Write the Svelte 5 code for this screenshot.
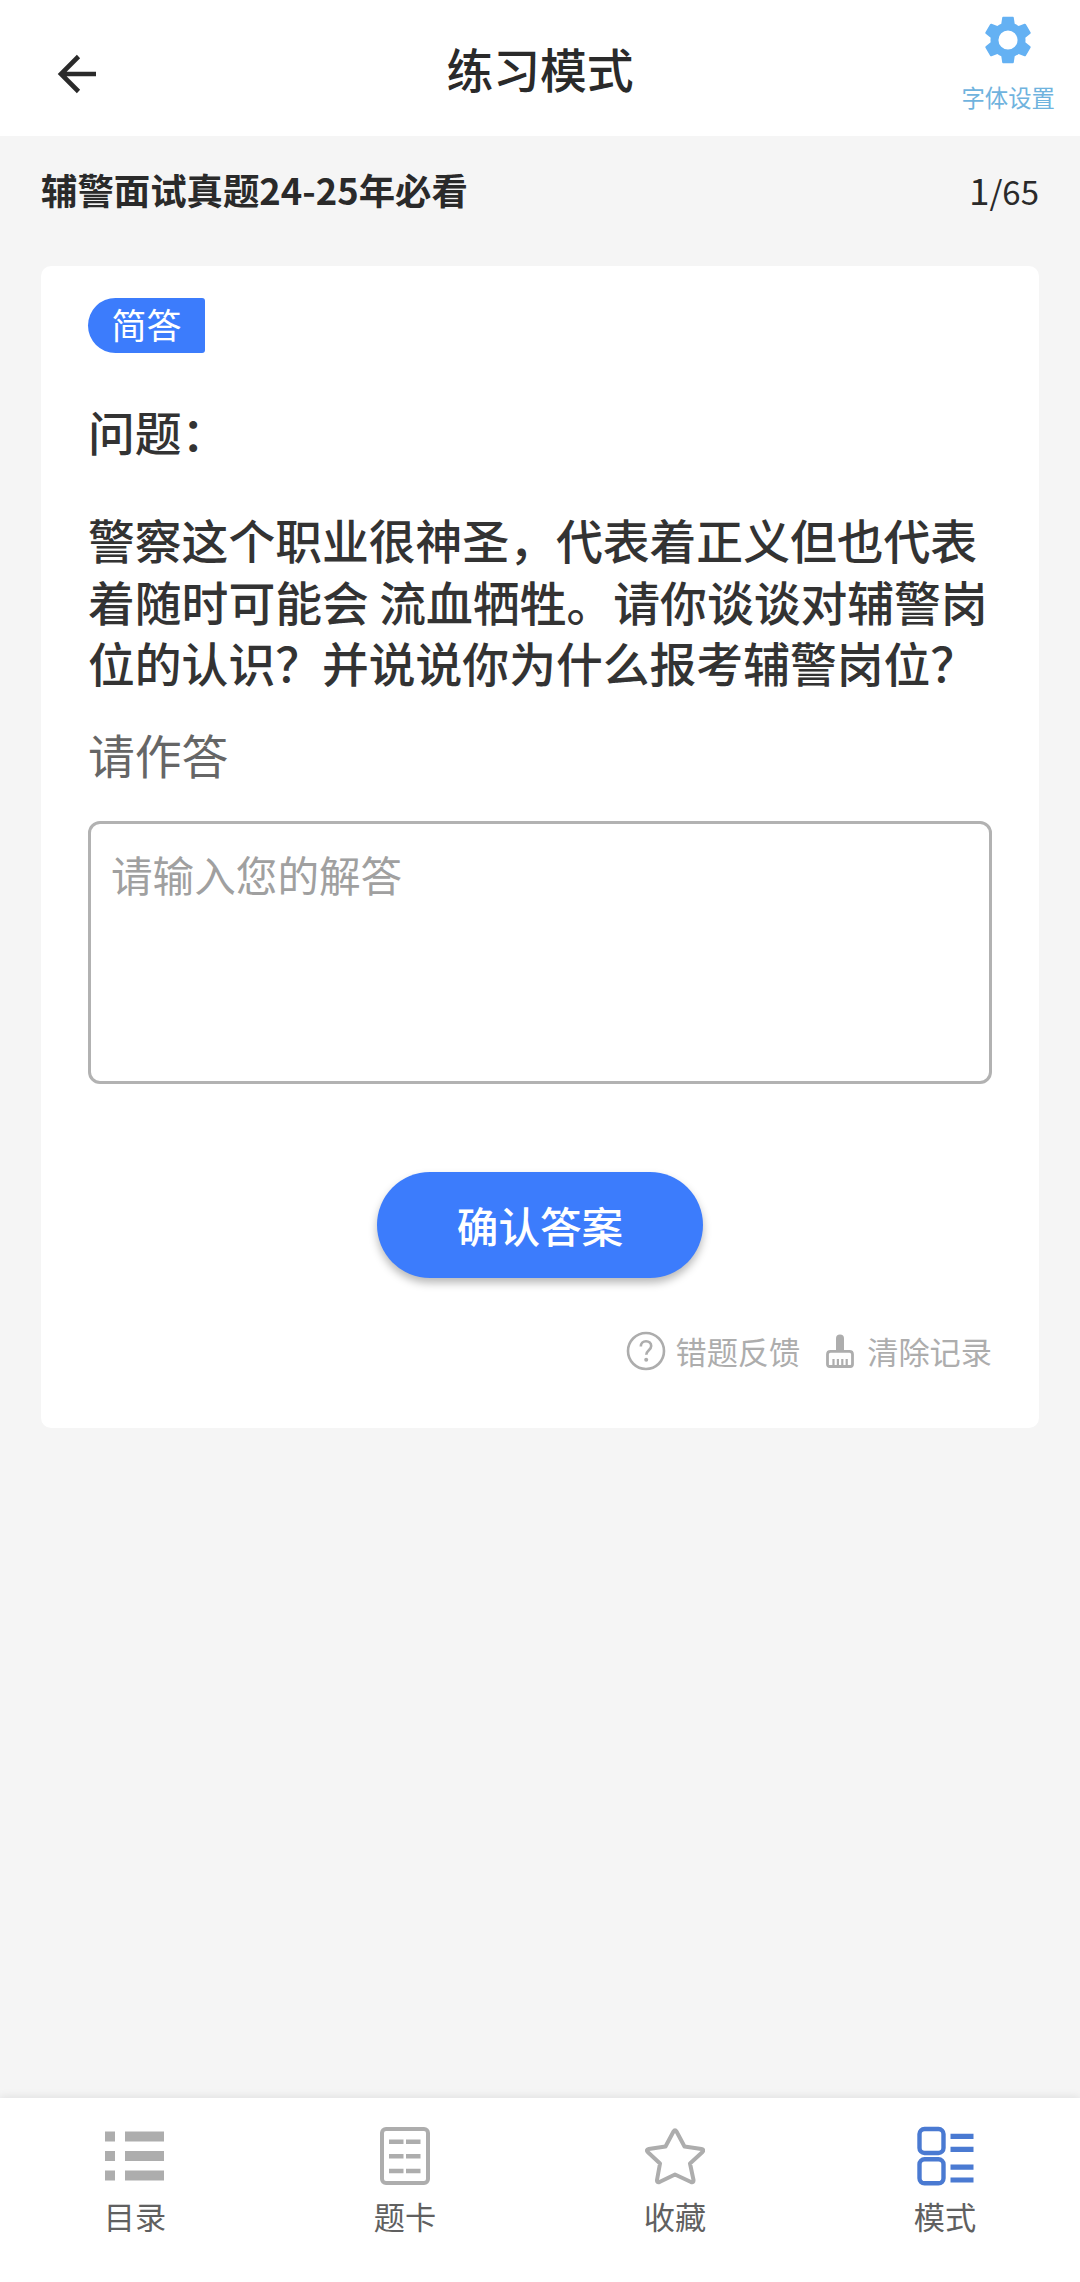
<script>
	let answer = "";
	let current = 1;
	let total = 65;
	let activeTab = "mode";

	const tabs = [
		{ id: "list", label: "目录" },
		{ id: "card", label: "题卡" },
		{ id: "star", label: "收藏" },
		{ id: "mode", label: "模式" },
	];
</script>

<div class="page">
	<header>
		<button class="back" aria-label="返回">
			<svg width="40" height="40" viewBox="0 0 40 40">
				<path d="M21.5 2.5 4 20l17.500 17.500M4 20h35" fill="none" stroke="#2a2a2a" stroke-width="4.600" />
			</svg>
		</button>
		<h1>练习模式</h1>
		<button class="font-setting">
			<svg width="56" height="56" viewBox="0 0 24 24">
				<path
					fill="#64b1f3"
					d="M19.430 12.980c.04-.32.07-.64.07-.98s-.03-.66-.07-.98l2.110-1.650c.19-.15.24-.42.12-.64l-2-3.460c-.12-.22-.39-.3-.61-.22l-2.490 1c-.52-.4-1.080-.73-1.690-.98l-.38-2.650C14.460 2.180 14.250 2 14 2h-4c-.25 0-.46.18-.49.42l-.38 2.650c-.61.25-1.170.59-1.690.98l-2.490-1c-.23-.09-.49 0-.61.22l-2 3.460c-.13.22-.07.49.12.64l2.110 1.650c-.04.32-.07.65-.07.98s.03.66.07.98l-2.110 1.650c-.19.15-.24.42-.12.64l2 3.460c.12.22.39.3.61.22l2.490-1c.52.4 1.080.73 1.690.98l.38 2.650c.03.24.24.42.49.42h4c.25 0 .46-.18.49-.42l.38-2.650c.61-.25 1.170-.59 1.690-.98l2.490 1c.23.09.49 0 .61-.22l2-3.460c.12-.22.07-.49-.12-.64l-2.110-1.650zM12 16.100a4.100 4.100 0 1 1 0-8.200 4.100 4.100 0 0 1 0 8.200z"
				/>
			</svg>
			<span>字体设置</span>
		</button>
	</header>

	<div class="subject">
		<h2>辅警面试真题24-25年必看</h2>
		<div class="count"><b>{current}</b>/{total}</div>
	</div>

	<main>
		<span class="tag">简答</span>
		<p class="question-title">问题：</p>
		<p class="question">
			警察这个职业很神圣，代表着正义但也代表着随时可能会 流血牺牲。请你谈谈对辅警岗位的认识？并说说你为什么报考辅警岗位？
		</p>
		<p class="hint">请作答</p>
		<textarea placeholder="请输入您的解答" bind:value={answer}></textarea>
		<button class="confirm">确认答案</button>
		<div class="actions">
			<button class="feedback">
				<svg width="40" height="40" viewBox="0 0 40 40" fill="none" stroke="#adadad">
					<circle cx="20" cy="20" r="18" stroke-width="2.600" />
					<path d="M14.800 15.500c0-3.200 2.200-5.300 5.200-5.300s5.200 1.900 5.200 4.800c0 4.200-4.900 4.400-4.900 8.800" stroke-width="2.600" />
					<circle cx="20.200" cy="28.800" r="2" fill="#adadad" stroke="none" />
				</svg>
				错题反馈
			</button>
			<button class="clear">
				<svg width="30" height="36" viewBox="0 0 30 36" fill="none" stroke="#adadad">
					<path d="M11 19V5.500a4 4 0 0 1 8 0V19z" fill="#adadad" stroke="none" />
					<path d="M5.500 18.300h19c2 0 3 1.200 3 3v10c0 1.500-.8 2.200-2.200 2.200H4.700c-1.400 0-2.200-.7-2.200-2.200v-10c0-1.800 1-3 3-3z" stroke-width="2.800" />
					<path d="M8.500 26v7M12.900 26v7M17.300 26v7M21.700 26v7" stroke-width="2.200" />
				</svg>
				清除记录
			</button>
		</div>
	</main>

	<nav>
		{#each tabs as tab}
			<button class="tab" on:click={() => (activeTab = tab.id)}>
				<svg width="60" height="60" viewBox="0 0 60 60" fill="none">
					{#if tab.id === "list"}
						<path d="M0 10.500h10M0 30h10M0 49.500h10M20 10.500h39M20 30h39M20 49.500h39" stroke="#adadad" stroke-width="10" />
					{:else if tab.id === "card"}
						<rect x="7" y="3" width="46" height="54" rx="4" stroke="#adadad" stroke-width="4" />
						<path d="M14 15.700h14.500M31 15.700h14.500M14 30.300h14.500M31 30.300h14.500M14 45h14.500M31 45h14.500" stroke="#adadad" stroke-width="4.600" />
					{:else if tab.id === "star"}
						<path
							d="M28.500 5.500q1.500-2.500 3 0L39.500 20.500 56.500 23q3 .7 1 3L45 37.500 48.500 54q.3 3-2.500 2L30 48.500 14.500 56q-2.800 1-2.500-2L15 37.500 2.700 26q-2-2.300 1-3L20.500 20.500z"
							stroke="#adadad"
							stroke-width="4"
							stroke-linejoin="round"
						/>
					{:else}
						<rect x="4.500" y="3" width="24" height="24" rx="5" stroke="#4a7ad2" stroke-width="4.400" />
						<rect x="4.500" y="33.300" width="24" height="24" rx="5" stroke="#4a7ad2" stroke-width="4.400" />
						<path d="M35.500 10.300h23M35.500 23.300h23M35.500 41.200h23M35.500 54h23" stroke="#4a7ad2" stroke-width="5.200" />
					{/if}
				</svg>
				<span>{tab.label}</span>
			</button>
		{/each}
	</nav>
</div>

<style>
	:global(body) {
		background: #f5f5f5;
	}

	.page {
		display: flex;
		flex-direction: column;
		height: 2282px;
		font-family: "Noto Sans CJK SC", sans-serif;
		color: #2a2a2a;
		background: #f5f5f5;
	}

	h1, h2, p {
		margin: 0;
	}

	button {
		margin: 0;
		padding: 0;
		border: none;
		background: none;
		font-family: inherit;
		color: inherit;
	}

	svg {
		display: block;
		flex: none;
	}

	header {
		display: grid;
		grid-template-columns: 1fr auto 1fr;
		align-items: center;
		height: 136px;
		background: #fff;
	}

	.back {
		justify-self: start;
		margin: 12px 0 0 57px;
	}

	h1 {
		font-size: 46.8px;
		font-weight: 500;
		line-height: 60px;
	}

	.font-setting {
		display: flex;
		flex-direction: column;
		align-items: center;
		align-self: start;
		justify-self: end;
		margin: 12px 25px 0 0;
		font-size: 23.4px;
		line-height: 30px;
		color: #6fb3de;
	}

	.font-setting span {
		margin-top: 14px;
	}

	.subject {
		display: flex;
		justify-content: space-between;
		align-items: baseline;
		height: 98px;
		padding: 32px 41px 0;
		line-height: 42px;
	}

	h2 {
		font-size: 36.4px;
		font-weight: 700;
	}

	.count {
		font-size: 33px;
	}

	.count b {
		font-size: 37px;
		font-weight: 400;
	}

	main {
		display: flex;
		flex-direction: column;
		box-sizing: border-box;
		height: 1162px;
		margin: 0 41px;
		padding: 32px 47px 0;
		border-radius: 10px;
		background: #fff;
	}

	.tag {
		align-self: flex-start;
		width: 117px;
		height: 55px;
		border-radius: 28px 3px 3px 28px;
		background: #3c7cfc;
		color: #fff;
		font-size: 35px;
		line-height: 52px;
		text-align: center;
	}

	.question-title {
		margin-top: 47px;
		font-size: 46.8px;
		font-weight: 500;
		line-height: 61.300px;
		color: #333;
	}

	.question {
		margin-top: 47px;
		font-size: 46.8px;
		font-weight: 500;
		line-height: 61.300px;
		color: #333;
	}

	.hint {
		margin-top: 31px;
		font-size: 46.8px;
		line-height: 61px;
		color: #666;
	}

	textarea {
		box-sizing: border-box;
		width: 904px;
		height: 263px;
		margin: 37px 0 0;
		padding: 25px 20px;
		border: 3px solid #b2b2b2;
		border-radius: 12px;
		outline: none;
		resize: none;
		background: #fff;
		font-family: inherit;
		font-size: 41.6px;
		line-height: 50px;
	}

	textarea::placeholder {
		color: #a0a0a0;
	}

	.confirm {
		align-self: center;
		width: 326px;
		height: 106px;
		margin-top: 88px;
		border-radius: 53px;
		background: #3c7cfc;
		box-shadow: 0 5px 9px rgba(0, 0, 0, 0.28);
		color: #fff;
		font-size: 41.6px;
		font-weight: 500;
	}

	.actions {
		display: flex;
		justify-content: flex-end;
		gap: 25px;
		margin-top: 53px;
	}

	.feedback, .clear {
		display: flex;
		align-items: center;
		gap: 9px;
		height: 40px;
		font-size: 31.2px;
		line-height: 40px;
		color: #adadad;
	}

	.clear {
		gap: 12px;
	}

	nav {
		display: flex;
		height: 184px;
		margin-top: auto;
		background: #fff;
		box-shadow: 0 -2px 8px rgba(0, 0, 0, 0.08);
	}

	.tab {
		display: flex;
		flex: 1;
		flex-direction: column;
		align-items: center;
		padding-top: 28px;
		font-size: 31.2px;
		line-height: 40px;
		color: #606060;
	}

	.tab span {
		margin-top: 10px;
	}
</style>
